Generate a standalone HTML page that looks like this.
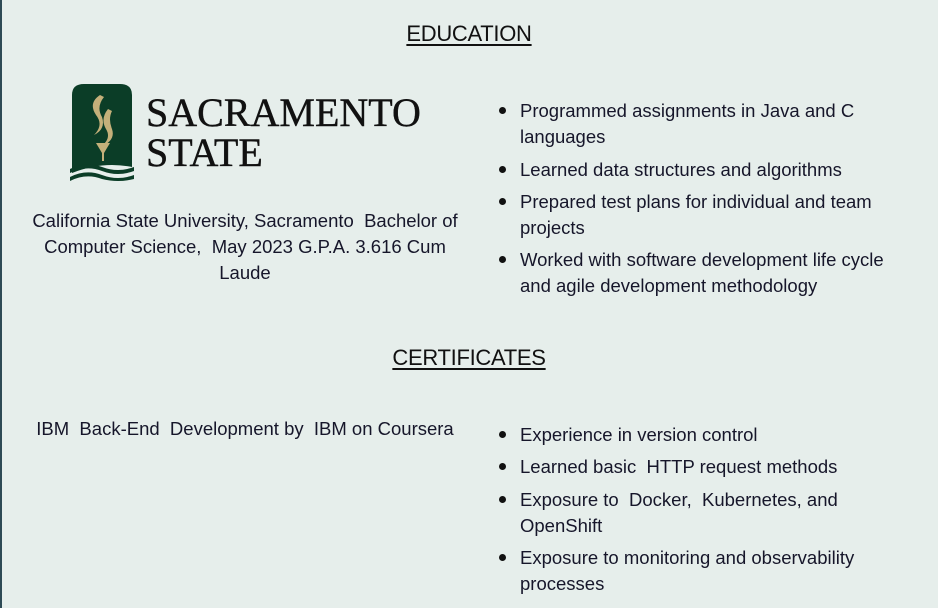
<!DOCTYPE html>
<html><head><style>
body{margin:0;width:938px;height:608px;background:#e6eeeb;position:relative;overflow:hidden;font-family:"Liberation Sans",sans-serif;color:#16162a;}
.bl{position:absolute;left:0;top:0;width:2px;height:608px;background:#2e4a55;}
.h{position:absolute;left:0;width:938px;text-align:center;font-size:22px;font-weight:normal;text-decoration:underline;text-decoration-thickness:2px;text-underline-offset:3px;letter-spacing:-0.3px;color:#111;}
.t{position:absolute;font-size:18.5px;white-space:nowrap;line-height:26px;}
.d{position:absolute;width:7px;height:7px;border-radius:50%;background:#111;}
.c{text-align:center;width:440px;left:25px;}
</style></head><body>
<div class="bl"></div>
<div class="h" style="top:21px">EDUCATION</div>
<div class="h" style="top:345px">CERTIFICATES</div>

<svg style="position:absolute;left:70px;top:83px" width="66" height="100" viewBox="0 0 66 100">
<path d="M2 12 Q2 1 14 1 L50 1 Q62 1 62 12 L62 84 Q32 78 2 90 Z" fill="#0b3d27"/>
<path d="M30 12 Q18 20 26 32 Q34 42 24 52 Q36 46 32 34 Q26 24 34 14 Z" fill="#c4b07a"/>
<path d="M38 26 Q30 36 36 46 Q42 56 30 64 Q46 58 42 46 Q38 36 42 28Z" fill="#c4b07a"/>
<path d="M26 60 L40 60 L34 70 L34 78 L32 78 L32 70Z" fill="#c4b07a"/>
<path d="M0 86 Q16 78 32 84 Q48 90 64 84 L64 88 Q48 94 32 88 Q16 82 0 90Z" fill="#0b3d27"/>
<path d="M0 94 Q16 86 32 92 Q48 98 64 92 L64 96 Q48 100 32 96 Q16 90 0 98Z" fill="#0b3d27"/>
</svg>
<div style="position:absolute;left:146px;top:93px;font-family:'Liberation Serif',serif;font-size:40px;line-height:40px;color:#111;letter-spacing:0;-webkit-text-stroke:0.4px #111">SACRAMENTO<br>STATE</div>

<div class="t c" style="top:208px">California State University, Sacramento&nbsp; Bachelor of<br>Computer Science,&nbsp; May 2023 G.P.A. 3.616 Cum<br>Laude</div>
<div class="t c" style="top:416px">IBM&nbsp; Back-End&nbsp; Development by&nbsp; IBM on Coursera</div>

<div class="d" style="left:499px;top:107px"></div>
<div class="t" style="left:520px;top:98px">Programmed assignments in Java and C<br>languages</div>
<div class="d" style="left:499px;top:166px"></div>
<div class="t" style="left:520px;top:157px">Learned data structures and algorithms</div>
<div class="d" style="left:499px;top:198px"></div>
<div class="t" style="left:520px;top:189px">Prepared test plans for individual and team<br>projects</div>
<div class="d" style="left:499px;top:256px"></div>
<div class="t" style="left:520px;top:247px">Worked with software development life cycle<br>and agile development methodology</div>

<div class="d" style="left:499px;top:431px"></div>
<div class="t" style="left:520px;top:422px">Experience in version control</div>
<div class="d" style="left:499px;top:463px"></div>
<div class="t" style="left:520px;top:454px">Learned basic&nbsp; HTTP request methods</div>
<div class="d" style="left:499px;top:496px"></div>
<div class="t" style="left:520px;top:487px">Exposure to&nbsp; Docker,&nbsp; Kubernetes, and<br>OpenShift</div>
<div class="d" style="left:499px;top:554px"></div>
<div class="t" style="left:520px;top:545px">Exposure to monitoring and observability<br>processes</div>
</body></html>
